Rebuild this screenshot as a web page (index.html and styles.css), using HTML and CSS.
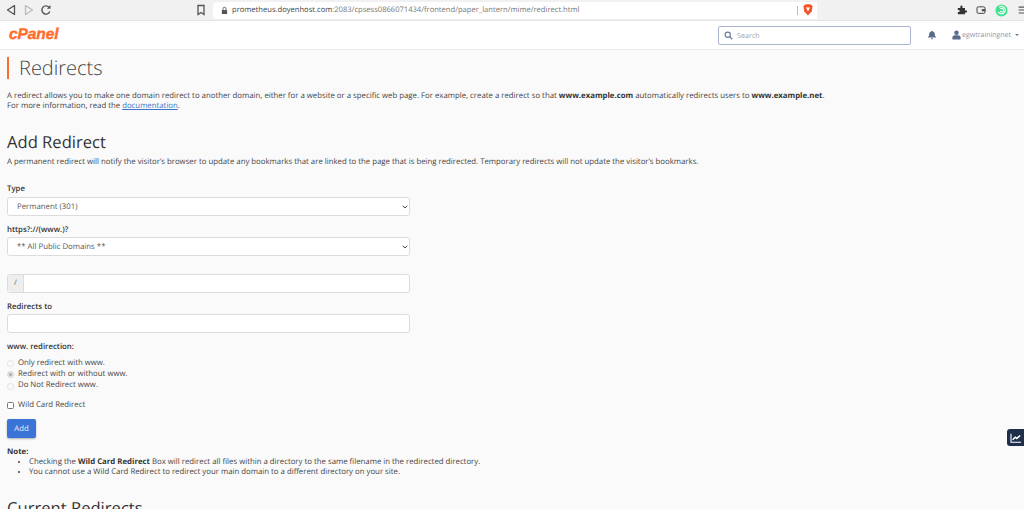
FILE: index.html
```html
<!DOCTYPE html>
<html lang="en">
<head>
<meta charset="utf-8">
<title>Redirects</title>
<link rel="stylesheet" href="styles.css">
</head>
<body>
<div class="chrome">
  <div class="nav-icons">
    <svg class="nav-icon" viewBox="0 0 12 12"><path d="M9.500 1.500v9L2.500 6z" fill="none" stroke="#555" stroke-width="1.300" stroke-linejoin="round"/></svg>
    <svg class="nav-icon" viewBox="0 0 12 12"><path d="M2.500 1.500v9l7-4.500z" fill="none" stroke="#bbb" stroke-width="1.300" stroke-linejoin="round"/></svg>
    <svg class="nav-icon" viewBox="0 0 12 12"><path d="M9.800 7.500A4.100 4.100 0 1 1 9 3.200" fill="none" stroke="#555" stroke-width="1.400"/><path d="M10.500 1v3.700H6.800z" fill="#555"/></svg>
  </div>
  <svg class="bookmark" viewBox="0 0 10 12"><path d="M2 1.500h6v9L5 8.500l-3 2z" fill="none" stroke="#555" stroke-width="1.300"/></svg>
  <div class="omnibox">
    <svg class="lock" viewBox="0 0 8 10"><path d="M1 4.500h6V9H1z" fill="#555"/><path d="M2.300 4.500V3a1.700 1.700 0 0 1 3.400 0v1.500" fill="none" stroke="#555"/></svg>
    <span class="url"><span class="host">prometheus.doyenhost.com</span>:2083/cpsess0866071434/frontend/paper_lantern/mime/redirect.html</span>
    <span class="omni-sep"></span>
    <svg class="brave" viewBox="0 0 10 12"><path d="M1.500 1 3 .2h4L8.500 1l1 1.200-.7 5L5 11.500 1.200 7.200.5 2.200z" fill="#f1562b"/><path d="M3 3.500h4L5 7.500z" fill="#fff"/></svg>
  </div>
  <div class="ext-icons">
    <svg class="ext" viewBox="0 0 12 12"><path d="M1 3.500h3V2a1.300 1.300 0 0 1 2.600 0v1.500h3v3H11a1.300 1.300 0 0 1 0 2.600H9.600V11H1V8.500h1a1.300 1.300 0 0 0 0-2.600H1z" fill="#333"/></svg>
    <svg class="ext" viewBox="0 0 12 12"><rect x="1.200" y="2.200" width="9.600" height="7.800" rx="1.500" fill="none" stroke="#444" stroke-width="1.200"/><rect x="7" y="5" width="4" height="2.500" fill="#444"/></svg>
    <svg class="ext ext-green" viewBox="0 0 14 14"><circle cx="7" cy="7" r="6.500" fill="#3fe08f"/><path d="M3.500 8.500a4 4 0 1 0 1-5M5.500 7.500a2 2 0 1 0 .3-2.300" fill="none" stroke="#fff" stroke-width="1.200"/></svg>
    <svg class="ext" viewBox="0 0 12 12"><path d="M2 2.500h8M2 6h8M2 9.500h8" stroke="#555" stroke-width="1.300"/></svg>
  </div>
</div>
<header class="topbar">
  <span class="logo">cPanel</span>
  <div class="search">
    <svg class="search-icon" viewBox="0 0 12 12"><circle cx="5" cy="5" r="3.500" fill="none" stroke="#6a7c9b" stroke-width="1.500"/><path d="M7.500 7.500 11 11" stroke="#6a7c9b" stroke-width="1.700"/></svg>
    <span class="search-text">Search</span>
  </div>
  <svg class="bell" viewBox="0 0 12 12"><path d="M6 .8a1 1 0 0 1 1 1c1.700.4 2.400 1.800 2.400 3.400 0 1.800.6 2.500 1.400 3.300v.5H1.200v-.5C2 7.700 2.600 7 2.600 5.200c0-1.600.7-3 2.400-3.400a1 1 0 0 1 1-1zM4.700 10h2.600a1.300 1.300 0 0 1-2.600 0z" fill="#5b6b8c"/></svg>
  <div class="user">
    <svg class="user-icon" viewBox="0 0 10 11"><circle cx="5" cy="3" r="2.500" fill="#5b6b8c"/><path d="M.5 10.500V8c0-1.500 1.500-2.300 2.500-2.300h4c1 0 2.500.8 2.500 2.300v2.500z" fill="#5b6b8c"/></svg>
    <span class="user-name">egwtrainingnet</span>
    <span class="caret"></span>
  </div>
</header>
<main class="content">
  <h1 class="page-title">Redirects</h1>
  <p class="intro">A redirect allows you to make one domain redirect to another domain, either for a website or a specific web page. For example, create a redirect so that <b>www.example.com</b> automatically redirects users to <b>www.example.net</b>.<br>For more information, read the <a href="#">documentation</a>.</p>
  <h2 class="section-title">Add Redirect</h2>
  <p class="section-desc">A permanent redirect will notify the visitor’s browser to update any bookmarks that are linked to the page that is being redirected. Temporary redirects will not update the visitor’s bookmarks.</p>
  <form class="form">
    <label class="field-label">Type</label>
    <select class="control select"><option>Permanent (301)</option></select>
    <label class="field-label label-https">https?://(www.)?</label>
    <select class="control select select-second"><option>** All Public Domains **</option></select>
    <div class="path-group">
      <span class="addon">/</span>
      <input class="path-input" type="text">
    </div>
    <label class="field-label label-to">Redirects to</label>
    <input class="control text-input" type="text">
    <div class="field-label label-www">www. redirection:</div>
    <div class="radios">
      <label class="radio"><input type="radio" name="www" disabled>Only redirect with www.</label>
      <label class="radio"><input type="radio" name="www" checked disabled>Redirect with or without www.</label>
      <label class="radio"><input type="radio" name="www" disabled>Do Not Redirect www.</label>
    </div>
    <label class="check"><input type="checkbox">Wild Card Redirect</label>
    <button class="add" type="button">Add</button>
  </form>
  <div class="note">
    <b>Note:</b>
    <ul>
      <li>Checking the <b>Wild Card Redirect</b> Box will redirect all files within a directory to the same filename in the redirected directory.</li>
      <li>You cannot use a Wild Card Redirect to redirect your main domain to a different directory on your site.</li>
    </ul>
  </div>
  <h2 class="section-title current">Current Redirects</h2>
</main>
<div class="stats-tab">
  <svg viewBox="0 0 14 12"><path d="M1 1v10h12" fill="none" stroke="#fff" stroke-width="1.300"/><path d="M3 8l3-3 2 1.500L12 3" fill="none" stroke="#fff" stroke-width="1.800"/></svg>
</div>
</body>
</html>
```
FILE: styles.css
```css
* { box-sizing: border-box; }
html, body { margin: 0; height: 509px; overflow: hidden; }
body { background: #fafafa; color: #444; font: 7.8px/12px "Open Sans", sans-serif; position: relative; text-rendering: geometricPrecision; }
select, input, button { text-rendering: geometricPrecision; }

.chrome { height: 21px; background: #f1f1f1; display: flex; align-items: center; border-bottom: 1px solid #e4e4e4; }
.nav-icons { display: flex; gap: 5.5px; padding-left: 5px; }
.nav-icon { width: 12px; height: 12px; display: block; }
.bookmark { width: 10px; height: 12px; margin-left: 144px; }
.omnibox { width: 604px; height: 17px; margin-left: 7px; background: #fff; border-radius: 4px 0 0 4px; display: flex; align-items: center; padding-left: 8px; }
.lock { width: 7px; height: 9px; }
.url { margin-left: 4px; font-size: 7.6px; color: #777; width: 565px; white-space: nowrap; }
.host { color: #444; }
.omni-sep { width: 1px; height: 9px; background: #bbb; }
.brave { width: 10px; height: 12px; margin-left: 5px; }
.ext-icons { display: flex; align-items: center; gap: 9px; margin-left: auto; margin-right: -3px; }
.ext { width: 10px; height: 10px; }
.ext-green { width: 13px; height: 13px; }

.topbar { height: 29px; background: #fff; border-bottom: 1px solid #eaeaea; display: flex; align-items: center; padding-left: 9px; }
.logo { font: italic 700 15.5px/16px "Liberation Sans", sans-serif; color: #ff6c2c; letter-spacing: -.1px; width: 700px; -webkit-text-stroke: .4px #ff6c2c; }
.search { width: 193px; height: 19px; margin-left: 9px; border: 1px solid #a9b4cc; border-radius: 2px; display: flex; align-items: center; padding-left: 5px; background: #fff; }
.search-icon { width: 9px; height: 9px; }
.search-text { margin-left: 4px; padding-top: 1px; color: #a3a3a3; font-size: 7.2px; }
.bell { width: 10px; height: 10px; margin-left: 16px; }
.user { display: flex; align-items: center; margin-left: 15px; color: #8a93a6; font-size: 7px; }
.user-icon { width: 9px; height: 10px; margin-right: 1px; }
.user-name { padding-top: 1px; }
.caret { margin-left: 4px; border: 2.5px solid transparent; border-top-color: #6b7896; border-bottom: 0; }

.content { padding: 0 7px; }
.page-title { margin: 7px 0 0; padding-left: 10px; border-left: 2px solid #ff6c2c; height: 22px; font: 300 20px/22px "Open Sans", sans-serif; color: #444; display: flex; align-items: center; }
.intro { margin: 12px 0 0; line-height: 10.4px; }
.intro b, .note b { color: #333; }
.intro a { color: #3a74c8; }
.section-title { margin: 19px 0 0; font: 400 16.6px/21px "Open Sans", sans-serif; color: #333; }
.section-desc { margin: 4.5px 0 0; line-height: 12px; }

.form { margin-top: 14px; width: 403px; display: flex; flex-direction: column; align-items: stretch; }
.field-label { font-weight: 600; line-height: 12px; padding-top: 1px; color: #333; display: block; }
.control { height: 19px; width: 403px; margin-top: 2px; border: 1px solid #dcdcdc; border-radius: 3px; background: #fff; font: 7.8px "Open Sans", sans-serif; color: #555; }
.select { padding: 0 0 0 9px; appearance: none; background-image: url("data:image/svg+xml,%3Csvg xmlns='http://www.w3.org/2000/svg' viewBox='0 0 6 4'%3E%3Cpath d='M.7.7 3 3l2.300-2.300' fill='none' stroke='%23444' stroke-width='1'/%3E%3C/svg%3E"); background-repeat: no-repeat; background-position: right 1.5px center; background-size: 6px 4px; }
.label-https { margin-top: 7px; }
.select-second { margin-top: 1px; }
.path-group { display: flex; height: 19px; margin-top: 18px; border: 1px solid #dcdcdc; border-radius: 3px; background: #fff; }
.addon { width: 16px; background: #eee; border-right: 1px solid #dcdcdc; text-align: center; line-height: 17px; color: #666; }
.path-input { flex: 1; border: 0; background: transparent; min-width: 0; }
.label-to { margin-top: 7px; }
.text-input { margin-top: 1px; }
.label-www { margin-top: 7px; }
.radios { margin-top: 4.5px; display: flex; flex-direction: column; }
.radio, .check { display: flex; align-items: center; height: 11.3px; line-height: 11.3px; color: #444; }
.radio input, .check input { appearance: none; margin: 0 4px 0 0; width: 7px; height: 7px; flex: none; border: 1px solid #e2e2e2; background: #fafafa; border-radius: 50%; }
.radio input:checked { background: #aaa; box-shadow: inset 0 0 0 1px #e8e8e8; }
.check { margin-top: 7.6px; height: 12px; }
.check input { border: 1px solid #777; background: #fff; border-radius: 1.5px; }
.add { margin-top: 8px; width: 29px; height: 19px; padding: 0; border: 0; border-radius: 2px; background: #3a74d6; color: #e6edfa; font: 7.8px "Open Sans", sans-serif; box-shadow: 0 1px 2px rgba(0,0,0,.3); }
.note { margin-top: 9px; line-height: 10px; }
.note ul { margin: 0; padding-left: 22px; }
.current { margin-top: 20px; }

.stats-tab { position: absolute; right: 0; top: 429px; width: 17px; height: 17px; background: #1f2f4b; border-radius: 3px 0 0 3px; display: flex; align-items: center; justify-content: center; }
.stats-tab svg { width: 12px; height: 10px; }
```
